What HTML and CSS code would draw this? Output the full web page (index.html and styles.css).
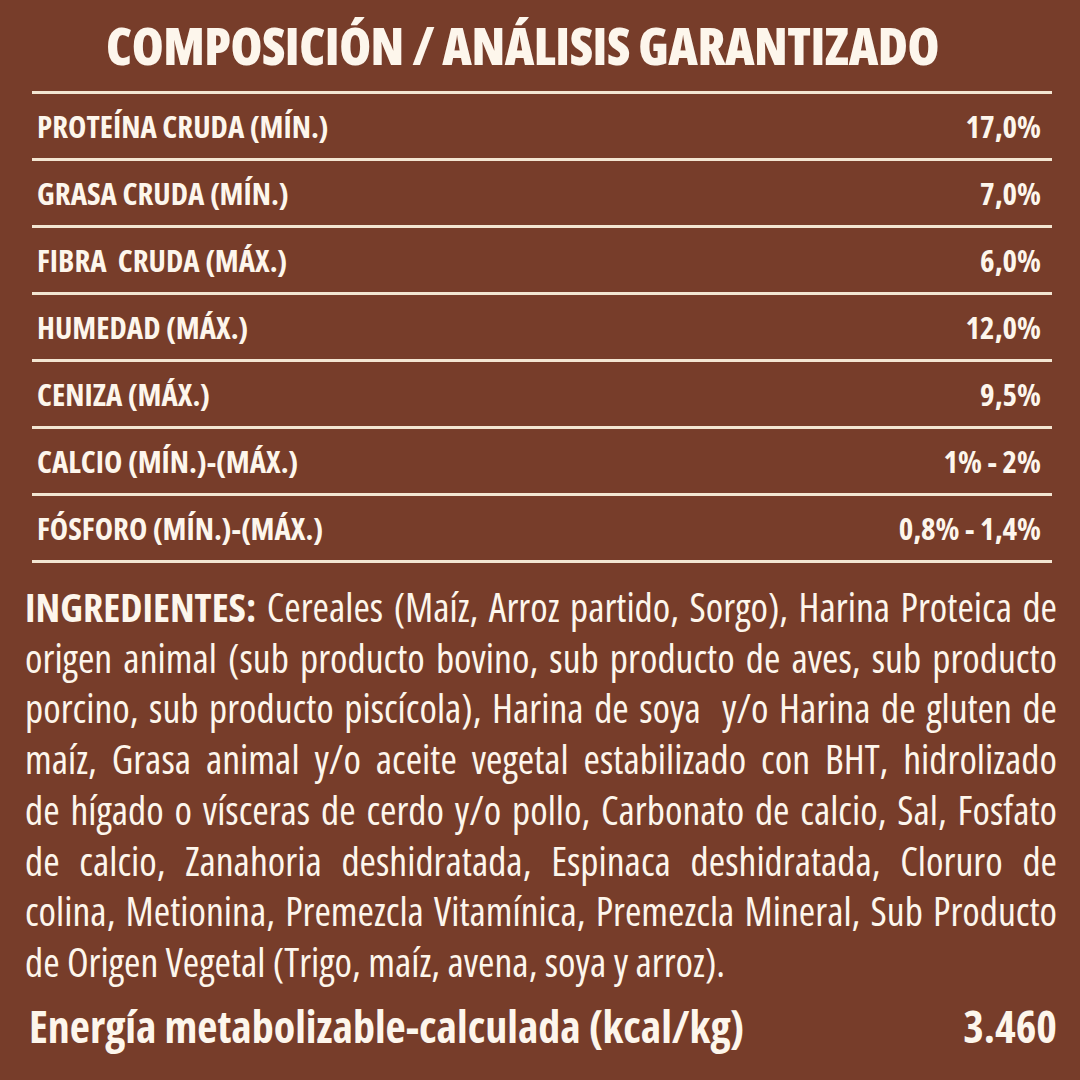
FILE: index.html
```html
<!DOCTYPE html>
<html lang="es">
<head>
<meta charset="utf-8">
<title>Composición / Análisis garantizado</title>
<link rel="stylesheet" href="styles.css">
</head>
<body>
<main class="sheet">
  <h1 class="title">COMPOSICIÓN / ANÁLISIS GARANTIZADO</h1>
  <div class="table">
    <div class="row"><span>PROTEÍNA CRUDA (MÍN.)</span><span>17,0%</span></div>
    <div class="row"><span>GRASA CRUDA (MÍN.)</span><span>7,0%</span></div>
    <div class="row"><span>FIBRA&nbsp; CRUDA (MÁX.)</span><span>6,0%</span></div>
    <div class="row"><span>HUMEDAD (MÁX.)</span><span>12,0%</span></div>
    <div class="row"><span>CENIZA (MÁX.)</span><span>9,5%</span></div>
    <div class="row"><span>CALCIO (MÍN.)-(MÁX.)</span><span>1% - 2%</span></div>
    <div class="row"><span>FÓSFORO (MÍN.)-(MÁX.)</span><span>0,8% - 1,4%</span></div>
  </div>
  <p class="ingredients">
    <span class="line"><b>INGREDIENTES:</b> Cereales (Maíz, Arroz partido, Sorgo), Harina Proteica de</span>
    <span class="line">origen animal (sub producto bovino, sub producto de aves, sub producto</span>
    <span class="line">porcino, sub producto piscícola), Harina de soya&nbsp; y/o Harina de gluten de</span>
    <span class="line">maíz, Grasa animal y/o aceite vegetal estabilizado con BHT, hidrolizado</span>
    <span class="line">de hígado o vísceras de cerdo y/o pollo, Carbonato de calcio, Sal, Fosfato</span>
    <span class="line">de calcio, Zanahoria deshidratada, Espinaca deshidratada, Cloruro de</span>
    <span class="line">colina, Metionina, Premezcla Vitamínica, Premezcla Mineral, Sub Producto</span>
    <span class="line last">de Origen Vegetal (Trigo, maíz, avena, soya y arroz).</span>
  </p>
  <div class="energy"><span>Energía metabolizable-calculada (kcal/kg)</span><span>3.460</span></div>
</main>
</body>
</html>
```
FILE: styles.css
```css
body {
  margin: 0;
  background: #773d2a;
}

.sheet {
  width: 1080px;
  height: 1080px;
  overflow: hidden;
  font-family: "Open Sans", "DejaVu Sans Condensed", sans-serif;
  font-stretch: 75%;
  color: #fdf6ec;
}

.title {
  margin: 0;
  height: 91px;
  display: flex;
  align-items: center;
  justify-content: center;
  padding-right: 35px;
  padding-bottom: 2px;
  font-size: 51.5px;
  font-weight: 800;
  letter-spacing: -0.5px;
  box-sizing: border-box;
}

.table {
  margin: 0 28px 0 32px;
  border-top: 3px solid #f3e6d2;
}

.row {
  height: 64px;
  border-bottom: 3px solid #f3e6d2;
  display: flex;
  justify-content: space-between;
  align-items: center;
  padding: 0 11px 0 5px;
  font-size: 31px;
  font-weight: 700;
  white-space: pre;
}

.ingredients {
  margin: 19px 23px 0 25px;
  font-size: 39.7px;
  line-height: 50.7px;
  font-weight: 400;
}

.ingredients b {
  font-weight: 700;
}

.line {
  display: block;
  white-space: nowrap;
  text-align: justify;
  text-align-last: justify;
}

.line.last {
  text-align-last: left;
}

.energy {
  margin: 13px 23px 0 29px;
  display: flex;
  justify-content: space-between;
  font-size: 44px;
  line-height: 50px;
  font-weight: 700;
}
```
